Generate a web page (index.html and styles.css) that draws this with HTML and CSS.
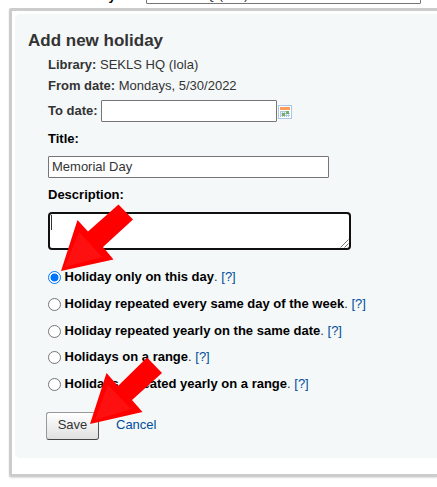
FILE: index.html
```html
<!DOCTYPE html>
<html lang="en">
<head>
<meta charset="utf-8">
<title>Add new holiday</title>
<link rel="stylesheet" href="styles.css">
</head>
<body>
<div class="toolbar"><b>library:</b><span class="select">SEKLS HQ (Iola)</span></div>
<main class="panel">
  <form class="fieldset">
    <h3>Add new holiday</h3>
    <div class="row library"><b>Library:</b>&nbsp;SEKLS HQ (Iola)</div>
    <div class="row from"><b>From date:</b>&nbsp;Mondays, 5/30/2022</div>
    <div class="row to"><b>To date:</b><input class="date" type="text">
      <svg class="calendar" width="14" height="14" viewBox="0 0 14 14" shape-rendering="crispEdges"><path fill="#a9c6e8" d="M0 0h14v14H0z"/><path fill="#fff" d="M1 1h12v12H1z"/><path fill="#ff9c5e" d="M2 2h10v3H2z"/><path fill="#b4c6e2" d="M2 6h1v6H2zM4 6h1v6H4zM6 6h1v6H6zM8 6h1v6H8zM10 6h1v6h-1zM2 6h9v1H2zM2 8h10v1H2zM2 10h10v1H2z"/><path fill="#6cb06c" d="M8 6h3v3H8zM4 8h3v3H4z"/></svg>
    </div>
    <label class="row title">Title:</label>
    <input class="title-input" type="text" value="Memorial Day">
    <label class="row desc">Description:</label>
    <div class="textarea"><i class="caret"></i>
      <svg class="grip" width="9" height="9" viewBox="0 0 9 9"><path stroke="#555" stroke-width=".8" d="M.5 8.500l8-8M4.500 8.500l4-4"/></svg>
    </div>
    <div class="options">
      <div class="option"><i class="radio checked"></i><b>Holiday only on this day</b>. <a>[?]</a></div>
      <div class="option"><i class="radio"></i><b>Holiday repeated every same day of the week</b>. <a>[?]</a></div>
      <div class="option"><i class="radio"></i><b>Holiday repeated yearly on the same date</b>. <a>[?]</a></div>
      <div class="option"><i class="radio"></i><b>Holidays on a range</b>. <a>[?]</a></div>
      <div class="option"><i class="radio"></i><b>Holidays repeated yearly on a range</b>. <a>[?]</a></div>
    </div>
    <div class="actions"><button type="button">Save</button><a>Cancel</a></div>
  </form>
</main>
<svg class="arrows" width="437" height="487" viewBox="0 0 437 487">
  <path fill="#f00" d="M118.500 204.500L133 219.500L103 247L113.500 259.500L61 271L77.500 220L88 231.500Z"/>
  <path fill="#ff1010" d="M79 232L102 257L65 267Z"/>
  <path fill="#f00" d="M147 357.500L162 373L132 400L142.500 412L90 424L106.500 373L118 386Z"/>
  <path fill="#ff1010" d="M108 385L131 409L95 420Z"/>
</svg>
</body>
</html>
```
FILE: styles.css
```css
* { box-sizing: border-box; }
body { margin: 0; width: 437px; height: 487px; overflow: hidden; background: #fff; color: #333; font: 13px/16px "Liberation Sans", Arial, sans-serif; }
.toolbar { height: 8px; overflow: hidden; display: flex; align-items: flex-end; color: #000; }
.toolbar b { width: 146px; padding-right: 26px; text-align: right; margin-bottom: 4px; }
.select { width: 275px; height: 22px; margin-bottom: 4px; border: 1px solid #767676; border-radius: 1px; padding: 4px 0 0 3px; background: #fff; color: #333; }
.panel { width: 428px; height: 469px; margin-left: 9px; padding: 3px 0 3px 3px; border: 3px solid #ccc; border-right: 0; border-radius: 3px 0 0 3px; box-shadow: 0 1px 2px #ddd; background: #fff; }
.fieldset { height: 444px; border-radius: 5px 0 0 5px; background: #f4f8f9; padding: 17px 0 0 33px; display: flex; flex-direction: column; }
h3 { margin: 0 0 0 -20px; font-size: 17px; line-height: 20px; height: 26px; }
.row { display: flex; align-items: center; white-space: pre; }
.library { height: 16px; }
.from { height: 26px; }
.to { height: 23px; white-space: normal; }
.date { width: 176px; height: 22px; margin: 0 1px 0 3px; border: 1px solid #767676; border-radius: 1px; padding: 0; }
.calendar { margin-top: 2px; }
.title, .desc { color: #000; font-weight: bold; }
.title { height: 34px; padding-bottom: 1px; }
.title-input { width: 281px; height: 22px; border: 1px solid #767676; border-radius: 1px; padding: 0 3px 2px; color: #333; font: inherit; background: #fff; }
.desc { height: 34px; }
.textarea { position: relative; width: 303px; height: 38px; border: 2px solid #101010; border-radius: 4px; background: #fff; }
.caret { position: absolute; left: 1px; top: 1px; width: 1px; height: 15px; background: #333; }
.grip { position: absolute; right: 0; bottom: 0; }
.options { margin-top: 13px; margin-bottom: 15px; }
.option { height: 26.750px; line-height: 27px; color: #333; white-space: nowrap; }
.option b { color: #000; }
a { color: #004d99; }
.radio { display: inline-block; width: 13px; height: 13px; margin-right: 3.500px; border: 1px solid #767676; border-radius: 50%; background: #fff; vertical-align: -3px; }
.checked { border-color: #0075ff; background: radial-gradient(circle, #0075ff 3.7px, #fff 4.300px); }
.actions { display: flex; margin-left: -2px; }
button { width: 53px; height: 28px; border: 1px solid; border-color: #999 #555 #444 #999; border-radius: 3px; background: linear-gradient(#fff, #e0e0e0); color: #333; font: inherit; padding: 0 0 2px; margin-right: 17px; }
.actions a { line-height: 25px; }
.arrows { position: absolute; left: 0; top: 0; }
```
